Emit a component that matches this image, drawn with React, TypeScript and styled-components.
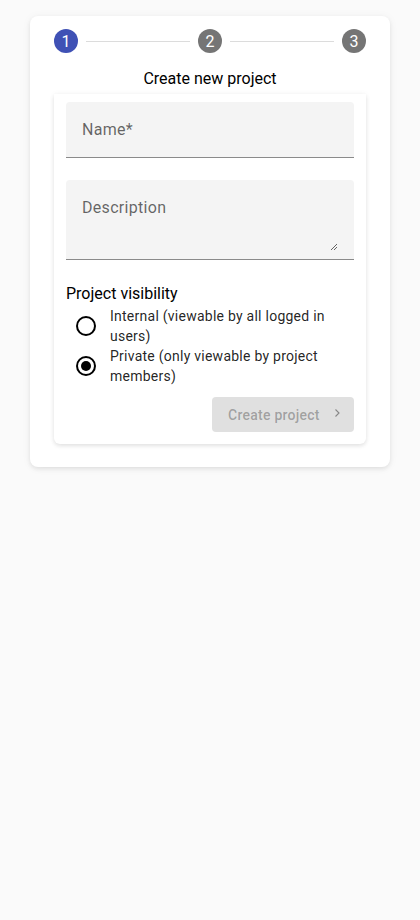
import React from 'react'
import styled, { createGlobalStyle, css } from 'styled-components'

const GlobalStyle = createGlobalStyle`
	html, body {
		margin: 0;
		padding: 0;
		background: #fafafa;
		font-family: Roboto, "Liberation Sans", sans-serif;
		color: rgba(0, 0, 0, 0.87);
	}
`

const Page = styled.div`
	padding: 16px 30px;
`

const OuterCard = styled.div`
	background: #fff;
	border-radius: 8px;
	box-shadow: 0 2px 4px rgba(0, 0, 0, 0.08), 0 1px 10px rgba(0, 0, 0, 0.05);
	padding: 13px 24px 23px;
`

const Stepper = styled.div`
	display: flex;
	align-items: center;
	gap: 8px;
`

const StepDot = styled.div<{ $active?: boolean }>`
	${({ $active }) => css`
		width: 24px;
		height: 24px;
		border-radius: 50%;
		flex: 0 0 24px;
		display: flex;
		align-items: center;
		justify-content: center;
		font-size: 16px;
		color: #fff;
		background: ${$active ? '#3f51b5' : '#757575'};
	`}
`

const StepLine = styled.div`
	flex: 1;
	height: 1px;
	background: #dcdcdc;
`

const Title = styled.div`
	text-align: center;
	font-size: 16px;
	line-height: 20px;
	margin-top: 16px;
	color: #000;
`

const InnerCard = styled.div`
	background: #fff;
	border-radius: 0 0 6px 6px;
	box-shadow: 0 2px 4px rgba(0, 0, 0, 0.1), 0 0 6px rgba(0, 0, 0, 0.04);
	padding: 8px 12px 12px;
	margin-top: 5px;
`

const Field = styled.div<{ $tall?: boolean }>`
	${({ $tall }) => css`
		position: relative;
		background: #f4f4f4;
		border-radius: 4px 4px 0 0;
		border-bottom: 1px solid #8a8a8a;
		height: ${$tall ? '80px' : '56px'};
		box-sizing: border-box;
		padding: 17px 16px 0;
		margin-bottom: ${$tall ? '0' : '22px'};
	`}
`

const FieldLabel = styled.div`
	font-size: 16px;
	line-height: 22px;
	letter-spacing: 0.3px;
	color: rgba(0, 0, 0, 0.6);
`

const Resize = styled.svg`
	position: absolute;
	right: 16px;
	bottom: 8px;
`

const SectionLabel = styled.div`
	font-size: 16px;
	line-height: 20px;
	color: #000;
	margin-top: 24px;
	margin-bottom: 2px;
`

const RadioRow = styled.label`
	display: flex;
	align-items: center;
	gap: 4px;
`

const RadioBox = styled.span`
	width: 40px;
	height: 40px;
	flex: 0 0 40px;
	display: flex;
	align-items: center;
	justify-content: center;
`

const RadioCircle = styled.span<{ $checked?: boolean }>`
	${({ $checked }) => css`
		width: 16px;
		height: 16px;
		border: 2px solid #000;
		border-radius: 50%;
		display: flex;
		align-items: center;
		justify-content: center;
		&::after {
			content: '';
			width: 10px;
			height: 10px;
			border-radius: 50%;
			background: ${$checked ? '#000' : 'transparent'};
		}
	`}
`

const RadioText = styled.span`
	font-size: 14px;
	line-height: 20px;
	letter-spacing: 0.25px;
	color: rgba(0, 0, 0, 0.87);
`

const Actions = styled.div`
	display: flex;
	justify-content: flex-end;
	margin-top: 11px;
`

const Button = styled.button`
	width: 142px;
	height: 35px;
	border: none;
	border-radius: 4px;
	background: #e0e0e0;
	color: rgba(0, 0, 0, 0.3);
	font-family: Roboto, "Liberation Sans", sans-serif;
	font-size: 14px;
	font-weight: 500;
	letter-spacing: 0.25px;
	display: flex;
	align-items: center;
	justify-content: flex-start;
	gap: 11px;
	padding: 0 0 0 16px;
	svg {
		margin-top: -4px;
	}
`

export default function App() {
	return (
		<>
			<GlobalStyle />
			<Page>
				<OuterCard>
					<Stepper>
						<StepDot $active>1</StepDot>
						<StepLine />
						<StepDot>2</StepDot>
						<StepLine />
						<StepDot>3</StepDot>
					</Stepper>
					<Title>Create new project</Title>
					<InnerCard>
						<Field>
							<FieldLabel>Name*</FieldLabel>
						</Field>
						<Field $tall>
							<FieldLabel>Description</FieldLabel>
							<Resize width="8" height="8" viewBox="0 0 8 8">
								<path d="M1 7L7 1M4 7L7 4" stroke="#555" strokeWidth="0.9" />
							</Resize>
						</Field>
						<SectionLabel>Project visibility</SectionLabel>
						<RadioRow>
							<RadioBox>
								<RadioCircle />
							</RadioBox>
							<RadioText>Internal (viewable by all logged in users)</RadioText>
						</RadioRow>
						<RadioRow>
							<RadioBox>
								<RadioCircle $checked />
							</RadioBox>
							<RadioText>Private (only viewable by project members)</RadioText>
						</RadioRow>
						<Actions>
							<Button>
								Create project
								<svg width="12" height="12" viewBox="0 0 24 24">
									<path d="M9 5l7 7-7 7" fill="none" stroke="rgba(0,0,0,0.4)" strokeWidth="2.2" />
								</svg>
							</Button>
						</Actions>
					</InnerCard>
				</OuterCard>
			</Page>
		</>
	)
}
